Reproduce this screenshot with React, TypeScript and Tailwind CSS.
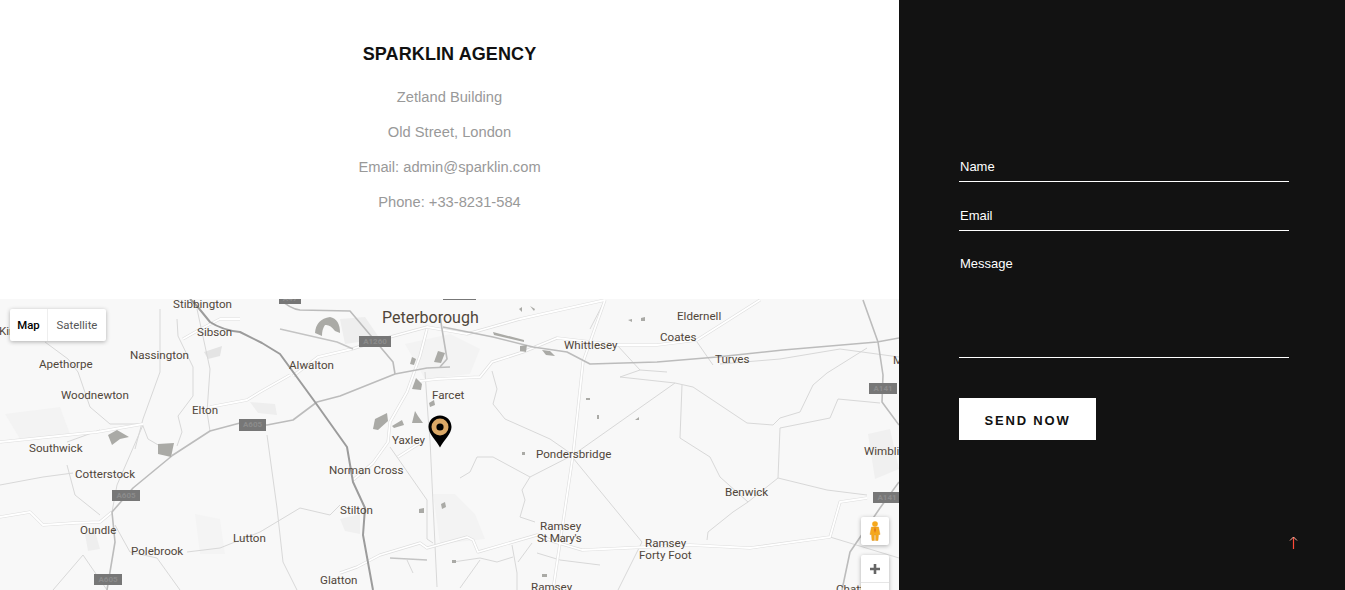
const darkRoads = [
  'M190 0 L197 7 L210 23 Q222 31 240 33 L262 44 L280 55 L315 103 L347 148 L353 183 L365 209 L363 236 L373 291',
]
const midRoads = [
  'M450 68 L427 69 L395 75 L340 97 L317 103 L293 121 L267 126 L240 124 L210 132 L173 156 L133 189 L112 213 L115 243 L107 291',
  'M280 0 Q290 10 300 11 L350 12 L393 63 L395 75',
  'M440 68 L447 60 L442 30 L440 17',
  'M863 1 L878 43 L883 76 L882 103 L899 126',
  'M899 183 L880 209 L850 253 L842 291',
  'M443 28 L493 38 L533 48 L567 53 L590 65 L657 63 L717 58 L783 51 L877 43 L899 39',
]
const lineRoads = [
  'M280 30 L337 43 L353 50',
  'M390 259 L427 261',
]
const whiteRoads = [
  'M605 1 L583 63 L573 156 L553 291',
  'M420 82 L437 80 L480 78 L492 63 L523 53 L557 39 L617 46 L657 46 L697 41 L760 1',
  'M293 77 L318 58 L352 50 L390 38 L427 28 L467 35 L520 20 L605 1',
  'M427 30 L420 57 L407 93 L390 123 L388 143 L373 164 L353 181',
  'M340 274 L357 268 L380 256 L420 244 L427 249 L467 238 L473 241 L478 253 L537 236 L555 243 L582 251 L690 246 L750 249 L830 238 L840 203 L867 199',
  'M0 218 L30 213 L43 226 L73 224 L100 223 L112 213',
  'M290 76 L260 93 L247 101 L210 108',
  'M398 158 L420 144',
  'M0 143 L97 133 L143 125',
  'M183 40 L197 32 L220 20 L240 20',
]
const thinRoads = [
  'M675 84 L573 156 L530 178 L522 191 L525 201 L520 218 L535 223',
  'M573 159 L642 243 L618 291',
  'M675 84 L693 88 L747 124 L773 126 L780 119 L800 113 L813 86 L827 74 L867 49',
  'M682 86 L680 139 L710 158 L720 178 L748 203 L733 213 L708 233 L707 241',
  'M780 129 L778 179 L748 203',
  'M778 179 L827 191 L867 196',
  'M780 129 L830 119 L838 100 L880 104',
  'M697 43 L713 66 M667 73 L640 71 L620 78 L675 84',
  'M492 72 L497 90 L493 105 L505 120 L550 140 L573 156',
  'M160 10 L160 73 L143 120 L135 150',
  'M143 125 L110 125 L90 108 L78 73 L68 60 L45 43',
  'M143 126 L117 186 L112 213',
  'M143 127 L148 140 L160 147 L173 156',
  'M177 20 L178 37 L193 68 L193 97 L178 117 L182 133 L177 147',
  'M197 10 L210 70 L207 113 L210 132',
  'M267 136 L277 209 L283 263 L297 291',
  'M187 253 L220 249 L260 233 L300 209 L330 216 L340 206',
  'M67 166 L75 196 L100 216',
  'M0 186 L43 178 L73 174',
  'M100 131 L67 143',
  'M115 226 L130 253 L157 259 L180 291',
  'M83 256 L107 291 M53 291 L83 256',
  'M425 73 L428 117 L430 141 L437 288',
  'M390 148 L427 201 L427 240 L433 244',
  'M460 179 L470 173 L477 158 L493 158 L530 178',
  'M407 261 L413 274',
  'M453 263 L480 259 L497 263 L513 258',
  'M512 246 L517 274 L517 291',
  'M460 289 L480 261',
  'M518 263 L532 244',
  'M537 254 L560 261 L600 266',
  'M720 65 L780 60 L840 50 L899 58',
  'M830 238 L899 259',
  'M640 71 L617 46',
  'M605 1 L590 30',
]
const patches = [
  'M315 34 Q316 20 330 18 Q340 20 340 34 L335 32 Q330 25 325 26 Q322 30 322 37 Z',
  'M158 145 L174 144 L171 158 L158 155 Z',
  'M108 136 L117 131 L129 138 L120 140 L112 146 Z',
  'M434 63 L438 52 L445 54 L441 64 Z',
  'M410 65 L412 58 L416 60 L414 66 Z',
  'M412 90 L416 79 L422 85 L421 91 Z',
  'M373 130 L375 120 L387 114 L388 122 L378 131 Z',
  'M392 127 L402 121 L404 126 L394 129 Z',
  'M412 124 L415 112 L418 117 L423 124 Z',
  'M429 104 L434 101 L435 106 L430 108 Z',
  'M493 33 L524 41 L524 43 L494 36 Z',
  'M520 47 L527 46 L526 53 L520 52 Z',
  'M542 51 L550 52 L555 57 L546 56 Z',
  'M441 205 L445 203 L446 208 L442 210 Z',
  'M419 210 L424 209 L424 214 L419 214 Z',
  'M452 261 L456 261 L456 264 L452 264 Z',
  'M542 275 L547 275 L547 278 L542 278 Z',
  'M522 153 L525 153 L525 156 L522 156 Z',
  'M586 99 L590 99 L590 101 L586 101 Z',
  'M597 116 L599 116 L599 120 L597 120 Z',
  'M635 121 L639 118 L639 121 Z',
  'M628 21 L632 20 L632 23 Z',
  'M641 19 L645 18 L645 22 L641 22 Z',
  'M530 7 L535 10 L534 12 Z',
  'M519 10 L522 8 L522 13 Z',
]
const blobs = [
  { d: 'M5 115 L60 108 L70 135 L20 140 Z', fill: 'fill-[#f3f3f3]' },
  { d: 'M340 220 L360 215 L360 235 L345 232 Z', fill: 'fill-[#f0f0f0]' },
  { d: 'M433 195 L455 195 L475 215 L485 240 L440 245 Z', fill: 'fill-[#f3f3f3]' },
  { d: 'M204 53 L222 47 L220 57 L208 60 Z', fill: 'fill-[#e4e4e4]' },
  { d: 'M250 103 L275 105 L277 116 L258 114 Z', fill: 'fill-[#eeeeee]' },
  { d: 'M340 20 L365 18 L380 40 L345 45 Z', fill: 'fill-[#eeeeee]' },
  { d: 'M405 45 L450 35 L480 50 L470 75 L425 80 Z', fill: 'fill-[#f3f3f3]' },
  { d: 'M868 135 L890 130 L899 170 L875 180 Z', fill: 'fill-[#f0f0f0]' },
  { d: 'M85 235 L95 232 L100 250 L88 252 Z', fill: 'fill-[#eeeeee]' },
  { d: 'M195 215 L220 220 L225 255 L200 255 Z', fill: 'fill-[#f4f4f4]' },
]

const labels = [
  { text: 'Kings Cliffe', className: 'left-[-1px] top-[26px]' },
  { text: 'Stibbington', className: 'left-[173px] top-[-1px]' },
  { text: 'Sibson', className: 'left-[197px] top-[27px]' },
  { text: 'Nassington', className: 'left-[130px] top-[50px]' },
  { text: 'Apethorpe', className: 'left-[39px] top-[59px]' },
  { text: 'Alwalton', className: 'left-[289px] top-[60px]' },
  { text: 'Woodnewton', className: 'left-[61px] top-[90px]' },
  { text: 'Elton', className: 'left-[192px] top-[105px]' },
  { text: 'Southwick', className: 'left-[29px] top-[143px]' },
  { text: 'Cotterstock', className: 'left-[75px] top-[169px]' },
  { text: 'Norman Cross', className: 'left-[329px] top-[165px]' },
  { text: 'Stilton', className: 'left-[340px] top-[205px]' },
  { text: 'Oundle', className: 'left-[80px] top-[225px]' },
  { text: 'Polebrook', className: 'left-[131px] top-[246px]' },
  { text: 'Lutton', className: 'left-[233px] top-[233px]' },
  { text: 'Glatton', className: 'left-[320px] top-[275px]' },
  { text: 'Yaxley', className: 'left-[392px] top-[135px]' },
  { text: 'Farcet', className: 'left-[432px] top-[90px]' },
  { text: 'Eldernell', className: 'left-[677px] top-[11px]' },
  { text: 'Coates', className: 'left-[660px] top-[32px]' },
  { text: 'Whittlesey', className: 'left-[564px] top-[40px]' },
  { text: 'Turves', className: 'left-[715px] top-[54px]' },
  { text: 'Pondersbridge', className: 'left-[536px] top-[149px]' },
  { text: 'Benwick', className: 'left-[725px] top-[187px]' },
  { text: 'Wimblington', className: 'left-[864px] top-[146px]' },
  { text: 'Ramsey', className: 'left-[540px] top-[221px]' },
  { text: "St Mary's", className: 'left-[537px] top-[233px] tracking-[-0.3px]' },
  { text: 'Ramsey', className: 'left-[645px] top-[238px]' },
  { text: 'Forty Foot', className: 'left-[639px] top-[250px]' },
  { text: 'Ramsey', className: 'left-[531px] top-[282px]' },
  { text: 'Chatteris', className: 'left-[836px] top-[284px]' },
  { text: 'March', className: 'left-[893px] top-[55px]' },
]

const shields = [
  { text: 'A47', className: 'left-[279px] top-[-6px] w-[22px] h-[11px]' },
  { text: '', className: 'left-[443px] top-[-10px] w-[33px] h-[11px]' },
  { text: 'A1260', className: 'left-[359px] top-[37px] w-[32px] h-[11px]' },
  { text: 'A605', className: 'left-[239px] top-[120px] w-[27px] h-[12px]' },
  { text: 'A605', className: 'left-[112px] top-[191px] w-[28px] h-[11px]' },
  { text: 'A605', className: 'left-[94px] top-[275px] w-[28px] h-[11px]' },
  { text: 'A141', className: 'left-[869px] top-[84px] w-[28px] h-[11px]' },
  { text: 'A141', className: 'left-[873px] top-[193px] w-[28px] h-[11px]' },
]

function MapPanel() {
  return (
    <div className="relative h-[291px] w-full overflow-hidden bg-[#f8f8f8] font-['Roboto',sans-serif]">
      <svg className="absolute inset-0" width="899" height="291" viewBox="0 0 899 291" fill="none">
        {blobs.map((b) => (
          <path key={b.d} d={b.d} className={b.fill} />
        ))}
        <g stroke="#d8d8d8" strokeWidth="1" strokeLinejoin="round">
          {thinRoads.map((d) => (
            <path key={d} d={d} />
          ))}
        </g>
        <g stroke="#dedede" strokeWidth="3" strokeLinejoin="round">
          {whiteRoads.map((d) => (
            <path key={d} d={d} />
          ))}
        </g>
        <g stroke="#ffffff" strokeWidth="1.8" strokeLinejoin="round">
          {whiteRoads.map((d) => (
            <path key={d} d={d} />
          ))}
        </g>
        <g stroke="#c4c4c4" strokeWidth="1.4" strokeLinejoin="round">
          {lineRoads.map((d) => (
            <path key={d} d={d} />
          ))}
        </g>
        <g stroke="#bcbcbc" strokeWidth="1.6" strokeLinejoin="round">
          {midRoads.map((d) => (
            <path key={d} d={d} />
          ))}
        </g>
        <g stroke="#9c9c9c" strokeWidth="2" strokeLinejoin="round">
          {darkRoads.map((d) => (
            <path key={d} d={d} />
          ))}
        </g>
        <g fill="#aaaaa6">
          {patches.map((d) => (
            <path key={d} d={d} />
          ))}
        </g>
      </svg>

      {shields.map((s) => (
        <span
          key={s.className}
          className={`absolute flex items-center justify-center bg-[#777777] text-[8px] font-bold text-[#8c8c8c] ${s.className}`}
        >
          {s.text}
        </span>
      ))}

      {labels.map((l) => (
        <span
          key={l.className}
          className={`absolute whitespace-nowrap text-[11.6px] leading-[13px] text-[#50463a] ${l.className}`}
        >
          {l.text}
        </span>
      ))}
      <span className="absolute left-[382px] top-[10px] whitespace-nowrap text-[16px] leading-[18px] text-[#50463a]">
        Peterborough
      </span>

      {/* Map type */}
      <div className="absolute left-[10px] top-[10px] flex h-[32px] w-[96px] rounded-[2px] bg-white text-[11.4px] shadow-[0_1px_4px_rgba(0,0,0,0.3)]">
        <button className="w-[38px] border-r border-[#eeeeee] pt-[2px] font-medium text-black">Map</button>
        <button className="flex-1 pt-[2px] text-[#565656]">Satellite</button>
      </div>

      {/* Marker */}
      <svg className="absolute left-[428px] top-[116px]" width="24" height="33" viewBox="0 0 24 33">
        <path d="M12 0.5C5.5 0.5 0.5 5.5 0.5 12C0.5 19 8 25 12 32.5C16 25 23.5 19 23.5 12C23.5 5.5 18.5 0.5 12 0.5Z" fill="#000000" />
        <circle cx="12" cy="12" r="8.5" fill="#dba866" />
        <circle cx="12" cy="12" r="3.6" fill="#000000" />
      </svg>

      {/* Street view */}
      <div className="absolute left-[861px] top-[218px] flex h-[28px] w-[28px] items-center justify-center rounded-[2px] bg-white shadow-[0_1px_4px_rgba(0,0,0,0.3)]">
        <svg width="12" height="20" viewBox="0 0 12 20">
          <circle cx="6" cy="3" r="2.8" fill="#f5a81c" />
          <path d="M2.5 6H9.5L11 13.5H9.5L9 19.5H6.6V14H5.4V19.5H3L2.5 13.5H1Z" fill="#f5a81c" stroke="#d98a10" strokeWidth="0.4" />
          <path d="M6 6L7 9L6 12L5 9Z" fill="#e0741a" />
        </svg>
      </div>

      {/* Zoom */}
      <div className="absolute left-[861px] top-[256px] h-[56px] w-[28px] rounded-[2px] bg-white shadow-[0_1px_4px_rgba(0,0,0,0.3)]">
        <div className="flex h-[28px] items-center justify-center border-b border-[#e6e6e6]">
          <svg width="12" height="12" viewBox="0 0 12 12">
            <path d="M1 6H11M6 1V11" stroke="#666666" strokeWidth="2.6" />
          </svg>
        </div>
      </div>
    </div>
  )
}

export default function App() {
  return (
    <div className="relative flex h-[590px] w-full overflow-hidden font-['Liberation_Sans',Arial,sans-serif]">
      <div className="flex w-[899px] shrink-0 flex-col">
        <div className="flex h-[299px] flex-col items-center bg-white pt-[44px]">
          <h2 className="mb-[15px] text-[18px] font-bold leading-[21px] tracking-[0.1px] text-[#111111]">
            SPARKLIN AGENCY
          </h2>
          <p className="text-[14.7px] leading-[35px] text-[#999999]">Zetland Building</p>
          <p className="text-[14.7px] leading-[35px] text-[#999999]">Old Street, London</p>
          <p className="text-[14.7px] leading-[35px] text-[#999999]">Email: admin@sparklin.com</p>
          <p className="text-[14.7px] leading-[35px] text-[#999999]">Phone: +33-8231-584</p>
        </div>
        <MapPanel />
      </div>

      <div className="flex-1 bg-[#121212] pl-[60px] pr-[56px] pt-[152px]">
        <form className="flex flex-col">
          <input
            placeholder="Name"
            className="h-[30px] w-full border-b border-white bg-transparent pl-px text-[13px] text-white outline-none placeholder:text-white"
          />
          <input
            placeholder="Email"
            className="mt-[19px] h-[30px] w-full border-b border-white bg-transparent pl-px text-[13px] text-white outline-none placeholder:text-white"
          />
          <textarea
            placeholder="Message"
            className="mt-[19px] h-[108px] w-full resize-none border-b border-white bg-transparent pl-px pt-[4px] text-[13px] text-white outline-none placeholder:text-white"
          />
          <button
            type="button"
            className="mt-[40px] h-[42px] w-[137px] bg-white pt-[3px] text-[13px] font-bold tracking-[1.8px] text-[#111111]"
          >
            SEND NOW
          </button>
        </form>
      </div>

      {/* Back to top */}
      <svg className="absolute left-[1288px] top-[535px]" width="11" height="15" viewBox="0 0 11 15" fill="none">
        <path d="M5.5 14V2" stroke="#ff4a38" strokeWidth="1.2" />
        <path d="M2 5.5L5.5 2L9 5.5" stroke="#ffb0a0" strokeWidth="1" />
      </svg>
    </div>
  )
}
